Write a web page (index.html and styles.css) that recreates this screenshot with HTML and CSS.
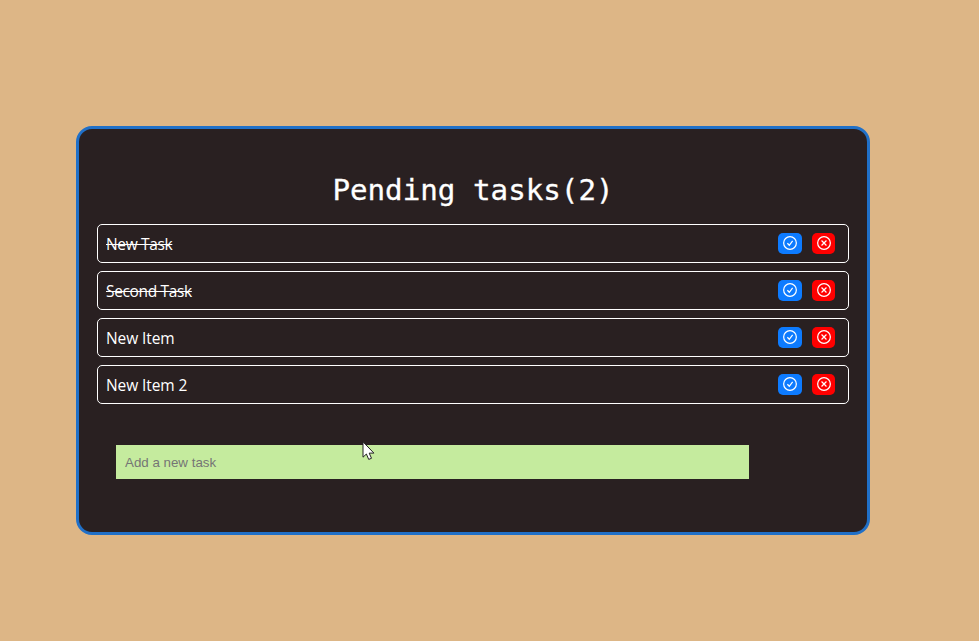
FILE: index.html
```html
<!DOCTYPE html>
<html lang="en">
<head>
<meta charset="utf-8">
<title>Pending tasks</title>
<link rel="stylesheet" href="styles.css">
</head>
<body>
<svg class="symbols" width="0" height="0">
  <symbol id="check" viewBox="0 0 16 16">
    <circle cx="8" cy="8" r="7.25"/>
    <path d="M5 8.3 7.2 10.6 11 5.6"/>
  </symbol>
  <symbol id="cross" viewBox="0 0 16 16">
    <circle cx="8" cy="8" r="7.25"/>
    <path d="M5.2 5.2 10.8 10.8M10.8 5.2 5.2 10.8"/>
  </symbol>
</svg>
<main class="todo">
  <h1 class="title">Pending tasks(2)</h1>
  <ul class="tasks">
    <li class="task"><span class="name done">New Task</span><button class="btn complete" aria-label="Complete"><svg class="icon"><use href="#check"/></svg></button><button class="btn remove" aria-label="Remove"><svg class="icon"><use href="#cross"/></svg></button></li>
    <li class="task"><span class="name done">Second Task</span><button class="btn complete" aria-label="Complete"><svg class="icon"><use href="#check"/></svg></button><button class="btn remove" aria-label="Remove"><svg class="icon"><use href="#cross"/></svg></button></li>
    <li class="task"><span class="name">New Item</span><button class="btn complete" aria-label="Complete"><svg class="icon"><use href="#check"/></svg></button><button class="btn remove" aria-label="Remove"><svg class="icon"><use href="#cross"/></svg></button></li>
    <li class="task"><span class="name">New Item 2</span><button class="btn complete" aria-label="Complete"><svg class="icon"><use href="#check"/></svg></button><button class="btn remove" aria-label="Remove"><svg class="icon"><use href="#cross"/></svg></button></li>
  </ul>
  <input class="new-task" type="text" placeholder="Add a new task">
</main>
<svg class="cursor" viewBox="0 0 13 20"><path d="M1 .8V16.2L4.4 13l2.3 5.4 2.8-1.1-2.3-5.2h4.7z"/></svg>
</body>
</html>
```

FILE: styles.css
```css
* {
  box-sizing: border-box;
}

body {
  margin: 0;
  height: 641px;
  overflow: hidden;
  padding: 126px 109px 0 76px;
  background: #ddb686;
  font-family: "Open Sans", "Noto Sans", sans-serif;
}

.symbols {
  position: absolute;
}

.todo {
  height: 409px;
  padding: 42px 18px 0;
  border: 3px solid #2070c8;
  border-radius: 16px;
  background: #292021;
  color: #fff;
}

.title {
  margin: 0 0 15px;
  height: 38px;
  text-align: center;
  font: 400 29.2px/38px "DejaVu Sans Mono", monospace;
  -webkit-text-stroke: 0.3px #fff;
}

.tasks {
  display: grid;
  gap: 8px;
  margin: 0;
  padding: 0;
  list-style: none;
}

.task {
  display: flex;
  align-items: center;
  height: 39px;
  padding: 0 13px 0 8px;
  border: 1px solid #fff;
  border-radius: 5px;
}

.name {
  flex: 1;
  font-size: 15.5px;
  line-height: 22px;
  letter-spacing: -0.1px;
}

.done {
  letter-spacing: -0.35px;
  text-decoration: line-through;
}

.btn {
  display: flex;
  align-items: flex-start;
  justify-content: center;
  width: 24px;
  height: 21px;
  padding: 3px 0 0;
  border: 0;
  border-radius: 5px;
  color: #fff;
}

.complete {
  margin-right: 10px;
  background: #0d7bff;
}

.remove {
  width: 23px;
  background: #f00;
}

.icon {
  width: 14px;
  height: 14px;
  fill: none;
  stroke: currentColor;
  stroke-width: 1.4;
}

.new-task {
  display: block;
  width: 633px;
  height: 34px;
  margin: 41px 0 0 19px;
  padding: 0 9px;
  border: 0;
  background: #c5eb9e;
  font: 13.33px "Liberation Sans", sans-serif;
}

.new-task::placeholder {
  color: #757575;
}

.cursor {
  position: absolute;
  left: 362px;
  top: 441px;
  width: 13px;
  height: 20px;
  fill: #fff;
  stroke: #222;
}
```
